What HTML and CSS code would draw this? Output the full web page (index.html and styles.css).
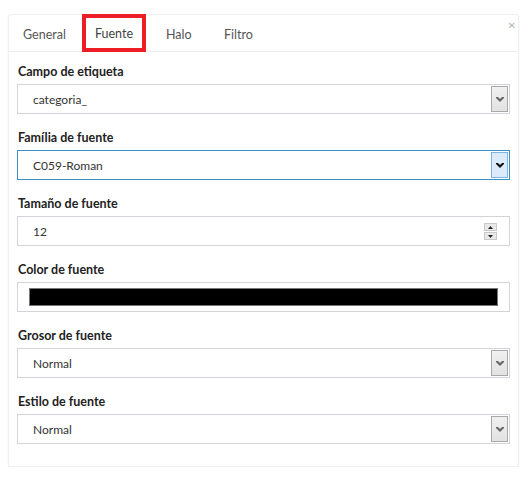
FILE: index.html
```html
<!DOCTYPE html>
<html>
<head>
<meta charset="utf-8">
<link rel="stylesheet" href="styles.css">
</head>
<body>
<div class="panel">
  <div class="tabs">
    <div class="tab tab-general">General</div>
    <div class="tab tab-fuente active">Fuente</div>
    <div class="tab tab-halo">Halo</div>
    <div class="tab tab-filtro">Filtro</div>
    <div class="close">&#x2715;</div>
  </div>
  <div class="form">
    <div class="group">
      <div class="label">Campo de etiqueta</div>
      <div class="field select">
        <span class="value">categoria_</span>
        <span class="arrow"><svg width="8" height="5" viewBox="0 0 8 5"><path d="M0 0h2l2 2 2-2h2v1L4 5 0 1z" fill="#666"/></svg></span>
      </div>
    </div>
    <div class="group">
      <div class="label">Família de fuente</div>
      <div class="field select focus">
        <span class="value">C059-Roman</span>
        <span class="arrow"><svg width="8" height="5" viewBox="0 0 8 5"><path d="M0 0h2l2 2 2-2h2v1L4 5 0 1z" fill="#111"/></svg></span>
      </div>
    </div>
    <div class="group">
      <div class="label">Tamaño de fuente</div>
      <div class="field number">
        <span class="value">12</span>
        <span class="spin">
          <span class="sbtn"><svg width="5" height="3" viewBox="0 0 5 3"><path d="M2.5 0L5 3H0z" fill="#222"/></svg></span>
          <span class="sbtn"><svg width="5" height="3" viewBox="0 0 5 3"><path d="M0 0h5L2.5 3z" fill="#222"/></svg></span>
        </span>
      </div>
    </div>
    <div class="group">
      <div class="label">Color de fuente</div>
      <div class="field color"><span class="swatch"></span></div>
    </div>
    <div class="group">
      <div class="label">Grosor de fuente</div>
      <div class="field select">
        <span class="value">Normal</span>
        <span class="arrow"><svg width="8" height="5" viewBox="0 0 8 5"><path d="M0 0h2l2 2 2-2h2v1L4 5 0 1z" fill="#666"/></svg></span>
      </div>
    </div>
    <div class="group">
      <div class="label">Estilo de fuente</div>
      <div class="field select">
        <span class="value">Normal</span>
        <span class="arrow"><svg width="8" height="5" viewBox="0 0 8 5"><path d="M0 0h2l2 2 2-2h2v1L4 5 0 1z" fill="#666"/></svg></span>
      </div>
    </div>
  </div>
</div>
</body>
</html>
```
FILE: styles.css
```css
html, body {
  margin: 0;
  padding: 0;
  background: #fff;
}
body {
  font-family: Lato, "Open Sans", sans-serif;
  color: #333;
}
.panel {
  position: relative;
  margin: 14px 0 0 8px;
  width: 511px;
  height: 453px;
  box-sizing: border-box;
  border: 1px solid #f0f0f0;
  border-radius: 3px;
  box-shadow: 0 1px 2px rgba(0,0,0,0.07);
  background: #fff;
}
.tabs {
  display: flex;
  align-items: stretch;
  height: 36px;
  border-bottom: 1px solid #ececec;
}
.tab {
  display: flex;
  align-items: center;
  padding-top: 2px;
  font-size: 12.5px;
  color: #555;
  box-sizing: border-box;
}
.tab-general { width: 73px; padding-left: 14px; }
.tab-fuente {
  width: 64px;
  justify-content: center;
  padding-top: 0;
  outline: 4px solid #ee1c25;
  outline-offset: -4px;
  margin-top: -1px;
  margin-bottom: -1px;
  color: #444;
}
.tab-halo { width: 78px; padding-left: 20px; }
.tab-filtro { padding-left: 0; }
.close {
  position: absolute;
  top: 5px;
  right: 2px;
  font-size: 10px;
  font-weight: bold;
  color: #b8b8b8;
  font-family: "DejaVu Sans", sans-serif;
}
.form {
  display: flex;
  flex-direction: column;
  gap: 16px;
  padding: 12px 8px 0;
}
.group {
  display: flex;
  flex-direction: column;
  gap: 4px;
}
.label {
  font-size: 12.5px;
  font-weight: bold;
  line-height: 16px;
  color: #222;
  padding-left: 1px;
}
.field {
  position: relative;
  height: 30px;
  box-sizing: border-box;
  border: 1px solid #d3d3da;
  display: flex;
  align-items: center;
  padding-left: 15px;
  font-size: 12px;
  color: #333;
}
.field.focus {
  border-color: #3b8fc7;
}
.arrow {
  position: absolute;
  top: 1px;
  right: 1px;
  bottom: 1px;
  width: 17px;
  box-sizing: border-box;
  border: 1px solid #a9a9a9;
  background: linear-gradient(#f0f0f0, #e2e2e2);
  display: flex;
  align-items: center;
  justify-content: center;
}
.focus .arrow {
  border-color: #7db3e6;
  background: #dcebfb;
}
.spin {
  position: absolute;
  right: 12px;
  top: 6px;
  width: 13px;
  height: 17px;
  display: flex;
  flex-direction: column;
  gap: 1px;
}
.sbtn {
  flex: 1;
  background: #e8e8e8;
  border: 1px solid #c9c9c9;
  display: flex;
  align-items: center;
  justify-content: center;
}
.color {
  padding: 0 11px;
}
.swatch {
  display: block;
  width: 100%;
  height: 18px;
  box-sizing: border-box;
  border: 1px solid #777;
  background: #000;
}
```
